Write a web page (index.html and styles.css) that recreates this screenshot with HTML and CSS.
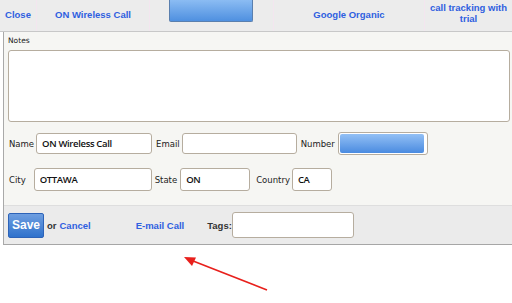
FILE: index.html
```html
<!DOCTYPE html>
<html>
<head>
    <title>Call Details</title>
    <link rel="stylesheet" href="styles.css">
</head>
<body>
    <div id="app">
        <div class="call-header">
            <div class="cell cell-close"><a href="#">Close</a></div>
            <div class="cell cell-name"><a href="#">ON Wireless Call</a></div>
            <div class="cell cell-play"><span class="blue-bar"></span></div>
            <div class="cell cell-source"><a href="#">Google Organic</a></div>
            <div class="cell cell-campaign"><a href="#">call tracking with trial</a></div>
        </div>
        <div class="call-panel">
            <div class="notes">
                <label for="notes">Notes</label>
                <textarea id="notes"></textarea>
            </div>
            <div class="field-row">
                <label>Name</label>
                <input type="text" class="field name-field" value="ON Wireless Call">
                <label>Email</label>
                <input type="text" class="field email-field" value="">
                <label>Number</label>
                <span class="field number-field"><span class="blue-fill"></span></span>
            </div>
            <div class="field-row row-two">
                <label>City</label>
                <input type="text" class="field city-field" value="OTTAWA">
                <label>State</label>
                <input type="text" class="field state-field" value="ON">
                <label>Country</label>
                <input type="text" class="field country-field" value="CA">
            </div>
            <div class="action-bar">
                <button class="save-button">Save</button>
                <span class="or-text">or</span>
                <a href="#" class="cancel-link">Cancel</a>
                <a href="#" class="email-link">E-mail Call</a>
                <span class="tags-label">Tags:</span>
                <input type="text" class="field tags-field">
            </div>
        </div>
        <svg class="arrow" width="512" height="303" viewBox="0 0 512 303">
            <line x1="267" y1="290" x2="188" y2="259" stroke="#e8201c" stroke-width="1.6"/>
            <polygon points="184,257 196,257.5 192,266" fill="#e8201c"/>
        </svg>
    </div>
</body>
</html>
```

FILE: styles.css
```css
body {
    margin: 0;
    font-family: "Liberation Sans", Arial, sans-serif;
    background: #fff;
}
#app {
    position: relative;
    width: 512px;
    height: 303px;
    overflow: hidden;
}
a {
    color: #2f5fe0;
    text-decoration: none;
    font-weight: bold;
}
.call-header {
    display: flex;
    height: 31px;
    background: #ececec;
    border-bottom: 1px solid #c8c8c8;
    font-size: 9.5px;
}
.cell {
    display: flex;
    align-items: center;
    justify-content: center;
    text-align: center;
    padding-bottom: 3px;
    border-right: 1px solid #f3e6ef;
    box-sizing: border-box;
}
.cell-close {
    width: 37px;
}
.cell-name {
    width: 113px;
}
.cell-play {
    width: 124px;
    align-items: flex-start;
}
.cell-source {
    width: 151px;
}
.cell-campaign {
    flex: 1;
    border-right: none;
    padding: 0 4px 6px;
    line-height: 11px;
}
.blue-bar {
    display: block;
    width: 82px;
    height: 21px;
    margin-left: -1px;
    background: linear-gradient(#8bbcf3, #4f90e0);
    border: 1px solid #5a7fae;
    border-top: none;
    border-radius: 0 0 2px 2px;
}
.call-panel {
    margin-left: 3px;
    border-left: 1px solid #a9a9a9;
    border-bottom: 1px solid #a6a6a6;
    background: #f6f6f3;
}
.notes {
    padding: 4px 0 0 4px;
}
.notes label {
    display: block;
    font-family: "DejaVu Sans", sans-serif;
    font-size: 7.5px;
    color: #222;
    height: 14px;
}
.notes textarea {
    display: block;
    width: 502px;
    height: 72px;
    box-sizing: border-box;
    border: 1px solid #b6ad9f;
    border-radius: 3px;
    background: #fff;
    resize: none;
    margin: 0;
}
.field-row {
    display: flex;
    align-items: center;
    height: 21px;
    margin-top: 11px;
    padding-left: 5px;
    font-family: "DejaVu Sans", sans-serif;
    font-size: 8.5px;
    color: #222;
}
.row-two {
    margin-top: 14px;
    height: 23px;
}
.field-row label {
    margin-right: 2px;
}
.field {
    box-sizing: border-box;
    height: 100%;
    border: 1px solid #b6ad9f;
    border-radius: 3px;
    background: #fff;
    padding: 0 5px;
    font-family: "Open Sans", sans-serif;
    font-weight: 600;
    font-size: 9.5px;
    letter-spacing: -0.35px;
    color: #111;
    margin: 0 4px 0 0;
}
.name-field {
    width: 116px;
}
.email-field {
    width: 115px;
}
.number-field {
    display: block;
    width: 90px;
    height: 23px;
    margin-left: 1px;
    padding: 1px 3px 1px 1px;
}
.blue-fill {
    display: block;
    height: 100%;
    background: linear-gradient(#93c0f5, #4a8be0);
    border-radius: 2px;
}
.city-field {
    width: 118px;
    margin-left: 6px;
    margin-right: 3px;
}
.state-field {
    width: 70px;
    margin-left: 1px;
    margin-right: 6px;
}
.country-field {
    width: 40px;
}
.action-bar {
    display: flex;
    align-items: center;
    height: 38px;
    margin-top: 14px;
    padding-left: 4px;
    background: #ebebeb;
    border-top: 1px solid #dedede;
    font-size: 9.5px;
}
.save-button {
    width: 36px;
    height: 25px;
    padding: 0;
    border: 1px solid #2d63b8;
    border-radius: 2px;
    background: linear-gradient(#6e9ee0, #2f72cc);
    color: #fff;
    font-family: "Liberation Sans", Arial, sans-serif;
    font-weight: bold;
    font-size: 12px;
}
.or-text {
    margin-left: 3px;
    font-weight: bold;
    color: #333;
}
.cancel-link {
    margin-left: 3px;
}
.email-link {
    margin-left: 45px;
}
.tags-label {
    margin-left: 23px;
    font-weight: bold;
    color: #333;
}
.tags-field {
    width: 122px;
    height: 26px;
    margin-left: 0;
}
.arrow {
    position: absolute;
    left: 0;
    top: 0;
    pointer-events: none;
}
```
